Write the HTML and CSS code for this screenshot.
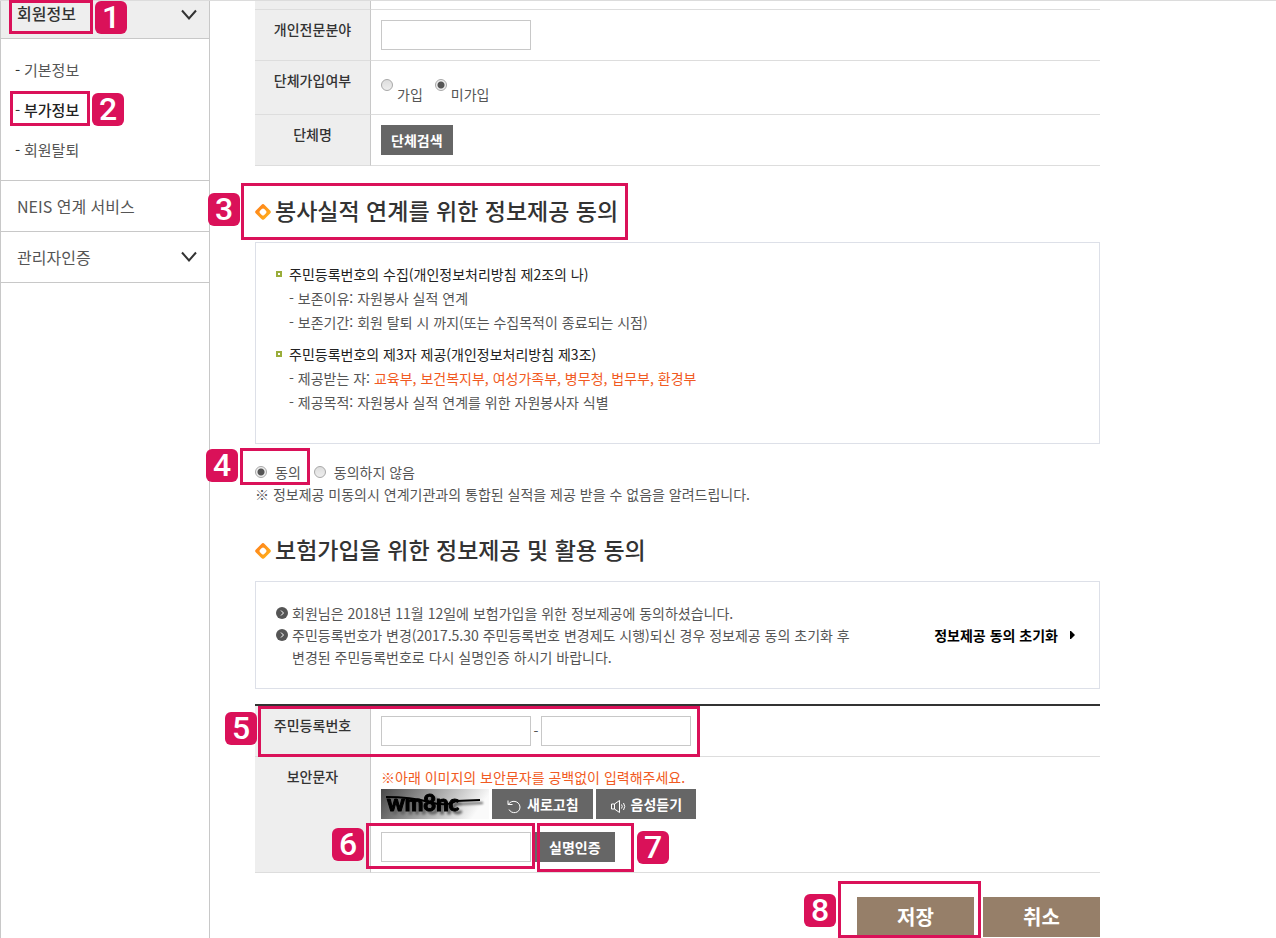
FILE: index.html
```html
<!DOCTYPE html>
<html lang="ko">
<head>
<meta charset="utf-8">
<title>회원정보 - 부가정보</title>
<link rel="stylesheet" href="styles.css">
</head>
<body>
<div class="page">
  <nav class="sidebar">
    <a class="menu menu-open" href="#">회원정보
      <svg class="chevron" viewBox="0 0 16 12" aria-hidden="true"><path d="M1 1.5 8 9.5 15 1.5"/></svg>
    </a>
    <ul class="submenu">
      <li><a href="#">기본정보</a></li>
      <li><a class="current" href="#">부가정보</a></li>
      <li><a href="#">회원탈퇴</a></li>
    </ul>
    <a class="menu" href="#">NEIS 연계 서비스</a>
    <a class="menu" href="#">관리자인증
      <svg class="chevron" viewBox="0 0 16 12" aria-hidden="true"><path d="M1 1.5 8 9.5 15 1.5"/></svg>
    </a>
  </nav>

  <main class="content">
    <table class="form">
      <tr class="cut"><th></th><td></td></tr>
      <tr>
        <th scope="row"><label for="field">개인전문분야</label></th>
        <td><input class="text" id="field" type="text"></td>
      </tr>
      <tr>
        <th scope="row">단체가입여부</th>
        <td>
          <div class="join">
            <label><input type="radio" name="join"><span>가입</span></label>
            <label><input type="radio" name="join" checked><span>미가입</span></label>
          </div>
        </td>
      </tr>
      <tr>
        <th scope="row">단체명</th>
        <td><button class="btn" type="button">단체검색</button></td>
      </tr>
    </table>

    <h2 class="title">
      <svg viewBox="1 1 14 14" aria-hidden="true"><defs><linearGradient id="amber" x1="0" x2="1" y1="0" y2="1"><stop offset="0" stop-color="#ff7a1a"/><stop offset="1" stop-color="#ffb81c"/></linearGradient></defs><path d="M6.6 1.8Q8 .4 9.4 1.8L14.2 6.6Q15.6 8 14.2 9.4L9.4 14.2Q8 15.6 6.6 14.2L1.8 9.4Q.4 8 1.8 6.6Z" fill="url(#amber)"/><rect x="5.400" y="5.400" width="5.200" height="5.200" rx="1.500" fill="#fff" transform="rotate(45 8 8)"/></svg>
      봉사실적 연계를 위한 정보제공 동의
    </h2>
    <section class="box">
      <h3 class="term">주민등록번호의 수집(개인정보처리방침 제2조의 나)</h3>
      <p class="item">- 보존이유: 자원봉사 실적 연계</p>
      <p class="item">- 보존기간: 회원 탈퇴 시 까지(또는 수집목적이 종료되는 시점)</p>
      <h3 class="term">주민등록번호의 제3자 제공(개인정보처리방침 제3조)</h3>
      <p class="item">- 제공받는 자: <em>교육부, 보건복지부, 여성가족부, 병무청, 법무부, 환경부</em></p>
      <p class="item">- 제공목적: 자원봉사 실적 연계를 위한 자원봉사자 식별</p>
    </section>
    <div class="agree">
      <label><input type="radio" name="agree" checked><span>동의</span></label>
      <label><input type="radio" name="agree"><span>동의하지 않음</span></label>
    </div>
    <p class="note">※ 정보제공 미동의시 연계기관과의 통합된 실적을 제공 받을 수 없음을 알려드립니다.</p>

    <h2 class="title">
      <svg viewBox="1 1 14 14" aria-hidden="true"><path d="M6.6 1.8Q8 .4 9.4 1.8L14.2 6.6Q15.6 8 14.2 9.4L9.4 14.2Q8 15.6 6.6 14.2L1.8 9.4Q.4 8 1.8 6.6Z" fill="url(#amber)"/><rect x="5.400" y="5.400" width="5.200" height="5.200" rx="1.500" fill="#fff" transform="rotate(45 8 8)"/></svg>
      보험가입을 위한 정보제공 및 활용 동의
    </h2>
    <section class="box status">
      <ul class="points">
        <li><svg viewBox="0 0 12 12" aria-hidden="true"><circle cx="6" cy="6" r="6"/><path d="M5 3.5 7.5 6 5 8.5"/></svg><span>회원님은 2018년 11월 12일에 보험가입을 위한 정보제공에 동의하셨습니다.</span></li>
        <li><svg viewBox="0 0 12 12" aria-hidden="true"><circle cx="6" cy="6" r="6"/><path d="M5 3.5 7.5 6 5 8.5"/></svg><span>주민등록번호가 변경(2017.5.30 주민등록번호 변경제도 시행)되신 경우 정보제공 동의 초기화 후<br>변경된 주민등록번호로 다시 실명인증 하시기 바랍니다.</span></li>
      </ul>
      <a class="reset" href="#">정보제공 동의 초기화
        <svg viewBox="0 0 5 8" aria-hidden="true"><path d="M0 0H1L5 4 1 8H0Z"/></svg>
      </a>
    </section>

    <table class="form verify">
      <tr>
        <th scope="row"><label for="rrn1">주민등록번호</label></th>
        <td>
          <div class="rrn">
            <input class="text" id="rrn1" type="text"><span>-</span><input class="text" type="password" aria-label="주민등록번호 뒷자리">
          </div>
        </td>
      </tr>
      <tr>
        <th scope="row"><label for="captcha">보안문자</label></th>
        <td>
          <p class="hint">※아래 이미지의 보안문자를 공백없이 입력해주세요.</p>
          <div class="captcha">
            <svg class="captcha-image" viewBox="0 0 108 30" role="img" aria-label="보안문자">
              <defs>
                <linearGradient id="fade" x1="0" y1="0" x2="1" y2="0.2"><stop offset="0" stop-color="#484848"/><stop offset="1" stop-color="#fafafa"/></linearGradient>
              </defs>
              <rect width="108" height="30" fill="url(#fade)"/>
              <g class="captcha-ink"><text x="6" y="22">wm8nc</text><path d="M5 8Q30 8 48 13T75 12L99 11"/></g>
            </svg>
            <button class="btn btn-icon" type="button">
              <svg viewBox="0 0 16 16" aria-hidden="true"><path d="M2 2.5V6.5H6.5M2.300 6.500C5 1.500 13.500 2.500 14 9 14 15.500 5.500 16.500 3 11.500"/></svg>새로고침
            </button>
            <button class="btn btn-icon" type="button">
              <svg viewBox="0 0 16 16" aria-hidden="true"><path d="M1.500 6V11H4.500L9.500 14.500V2.500L4.500 6ZM4.500 6V11M11.500 6.500Q13 8.500 11.500 10.500M13.500 5Q16 8.500 13.500 12"/></svg>음성듣기
            </button>
          </div>
          <div class="confirm">
            <input class="text" id="captcha" type="text">
            <button class="btn btn-confirm" type="button">실명인증</button>
          </div>
        </td>
      </tr>
    </table>

    <div class="actions">
      <button type="submit">저장</button>
      <button type="button">취소</button>
    </div>
  </main>

  <div class="guide">
    <span class="frame frame-1"></span><span class="step step-1">1</span>
    <span class="frame frame-2"></span><span class="step step-2">2</span>
    <span class="frame frame-3"></span><span class="step step-3">3</span>
    <span class="frame frame-4"></span><span class="step step-4">4</span>
    <span class="frame frame-5"></span><span class="step step-5">5</span>
    <span class="frame frame-6"></span><span class="step step-6">6</span>
    <span class="frame frame-7"></span><span class="step step-7">7</span>
    <span class="frame frame-8"></span><span class="step step-8">8</span>
  </div>
</div>
</body>
</html>
```
FILE: styles.css
```css
*, *::before { box-sizing: border-box; }

body {
  margin: 0;
  background: #fff;
  color: #555;
  font: 14px/20px "Noto Sans CJK KR", sans-serif;
}
h2, h3, p, ul { margin: 0; padding: 0; }
ul { list-style: none; }
a { color: inherit; text-decoration: none; }
button, input { font: inherit; }

.page {
  position: relative;
  display: flex;
  min-height: 100vh;
  border-top: 1px solid #dcdcdc;
}

/* Side menu */
.sidebar {
  flex: 0 0 210px;
  border: solid #c8c8c8;
  border-width: 0 1px;
}
.menu {
  display: flex;
  align-items: center;
  justify-content: space-between;
  padding: 12px 12px 12px 16px;
  border-bottom: 1px solid #c8c8c8;
  font-size: 16px;
  line-height: 26px;
}
.menu-open {
  padding-top: 0;
  padding-bottom: 13px;
  background: #eee;
  color: #333;
  font-weight: 500;
  line-height: 24px;
}
.chevron {
  width: 16px;
  height: 12px;
  fill: none;
  stroke: #333;
  stroke-width: 2;
}
.menu-open .chevron { margin-top: 3px; }
.submenu {
  padding: 11px 14px 10px;
  border-bottom: 1px solid #c8c8c8;
  font-size: 15px;
  line-height: 40px;
}
.submenu li { display: flex; }
.submenu li::before {
  content: "-";
  width: 9px;
  color: #333;
}
.submenu .current { color: #222; font-weight: 500; }

/* Form tables */
.content {
  flex: 1;
  max-width: 890px;
  padding-left: 45px;
}
.form {
  width: 100%;
  border-spacing: 0;
}
.form th, .form td {
  padding: 10px;
  border-bottom: 1px solid #ddd;
  vertical-align: top;
}
.form th {
  width: 116px;
  padding-top: 9px;
  border-right: 1px solid #c8c8c8;
  background: #eee;
  color: #333;
  font-weight: 500;
}
.form .cut th, .form .cut td { padding: 4px; }
.text {
  display: block;
  width: 150px;
  height: 30px;
  padding: 0 6px;
  border: 1px solid #c8c8c8;
  background: #fff;
}
.btn {
  display: block;
  height: 30px;
  padding: 0 10px;
  border: 0;
  background: #666;
  color: #fff;
  font-weight: 700;
}
input[type="radio"] {
  appearance: none;
  flex: none;
  width: 12px;
  height: 12px;
  margin: 0;
  border: 1px solid #a8a8a8;
  border-radius: 50%;
  background: linear-gradient(#ddd, #eee);
}
input[type="radio"]:checked {
  background: radial-gradient(circle, #555 3px, #eee 4px);
}
.join {
  display: flex;
  gap: 12px;
  padding-top: 8px;
}
.join label { display: flex; gap: 4px; }
.join span { padding-top: 5px; }

/* Consent sections */
.title {
  display: flex;
  align-items: center;
  gap: 4px;
  padding: 26px 0 14px;
  color: #333;
  font-size: 23px;
  font-weight: 500;
  line-height: 36px;
}
.title svg {
  width: 16px;
  height: 16px;
  margin-top: 3px;
}
.box {
  padding: 19px 24px 29px 20px;
  border: 1px solid #dde0e8;
}
.term {
  display: flex;
  align-items: center;
  gap: 7px;
  color: #222;
  font-size: 14px;
  font-weight: 400;
  line-height: 24px;
}
.term::before {
  content: "";
  width: 6px;
  height: 6px;
  border: 2px solid #9aad3a;
}
.item {
  padding-left: 13px;
  line-height: 24px;
}
.item + .term { margin-top: 8px; }
.item em, .hint { color: #f15a22; font-style: normal; }
.agree {
  display: flex;
  gap: 13px;
  margin-top: 17px;
  line-height: 22px;
}
.agree label { display: flex; align-items: center; gap: 8px; }
.note { line-height: 22px; }

.status {
  display: flex;
  align-items: center;
  justify-content: space-between;
  padding-top: 20px;
  padding-bottom: 20px;
}
.points { line-height: 22px; }
.points li { display: flex; gap: 4px; }
.points svg {
  flex: none;
  width: 12px;
  height: 12px;
  margin-top: 5px;
  fill: #555;
}
.points path { fill: none; stroke: #fff; }
.reset {
  display: flex;
  align-items: center;
  gap: 12px;
  color: #000;
  font-weight: 700;
}
.reset svg { width: 5px; height: 8px; }

/* Identity check */
.verify {
  margin-top: 15px;
  border-top: 2px solid #333;
}
.rrn { display: flex; align-items: center; }
.rrn span { width: 10px; text-align: center; }
.captcha {
  display: flex;
  gap: 3px;
  margin: 2px 0 13px;
}
.captcha-image { width: 108px; height: 30px; }
.captcha-image text {
  font: 900 22px Lato, sans-serif;
  stroke-width: 1;
}
.captcha-image path { fill: none; stroke-width: 2; }
.captcha-ink {
  fill: #000;
  stroke: #000;
  filter: drop-shadow(3px 3px 1px #666);
}
.btn-icon {
  display: flex;
  align-items: center;
  gap: 5px;
  padding: 0 14px;
}
.btn-icon svg {
  width: 16px;
  height: 16px;
  margin-top: 3px;
  fill: none;
  stroke: #fff;
}
.confirm { display: flex; gap: 4px; }
.btn-confirm { padding: 0 14px; }

.actions {
  display: flex;
  justify-content: flex-end;
  gap: 9px;
  margin-top: 24px;
}
.actions button {
  width: 117px;
  height: 40px;
  border: 0;
  background: #967f69;
  color: #fff;
  font-size: 20px;
  font-weight: 700;
}

/* Numbered walkthrough laid over the page */
.guide {
  position: absolute;
  top: -1px;
  left: 0;
  pointer-events: none;
}
.frame {
  position: absolute;
  border: 3px solid #da1159;
}
.step {
  position: absolute;
  width: 32px;
  height: 33px;
  border-radius: 6px;
  background: #da1159;
  color: #fff;
  font: 500 32px/33px Roboto, sans-serif;
  text-align: center;
}
.frame-1 { left: 9px; top: 0; width: 84px; height: 34px; }
.frame-2 { left: 10px; top: 91px; width: 80px; height: 35px; }
.frame-3 { left: 241px; top: 183px; width: 387px; height: 57px; }
.frame-4 { left: 240px; top: 448px; width: 70px; height: 37px; }
.frame-5 { left: 258px; top: 706px; width: 442px; height: 51px; }
.frame-6 { left: 366px; top: 823px; width: 169px; height: 46px; }
.frame-7 { left: 537px; top: 823px; width: 97px; height: 49px; }
.frame-8 { left: 838px; top: 881px; width: 143px; height: 57px; }
.step-1 { left: 95px; top: 1px; }
.step-2 { left: 92px; top: 93px; }
.step-3 { left: 208px; top: 193px; }
.step-4 { left: 206px; top: 449px; }
.step-5 { left: 225px; top: 712px; }
.step-6 { left: 332px; top: 828px; }
.step-7 { left: 637px; top: 831px; }
.step-8 { left: 804px; top: 894px; }
```
